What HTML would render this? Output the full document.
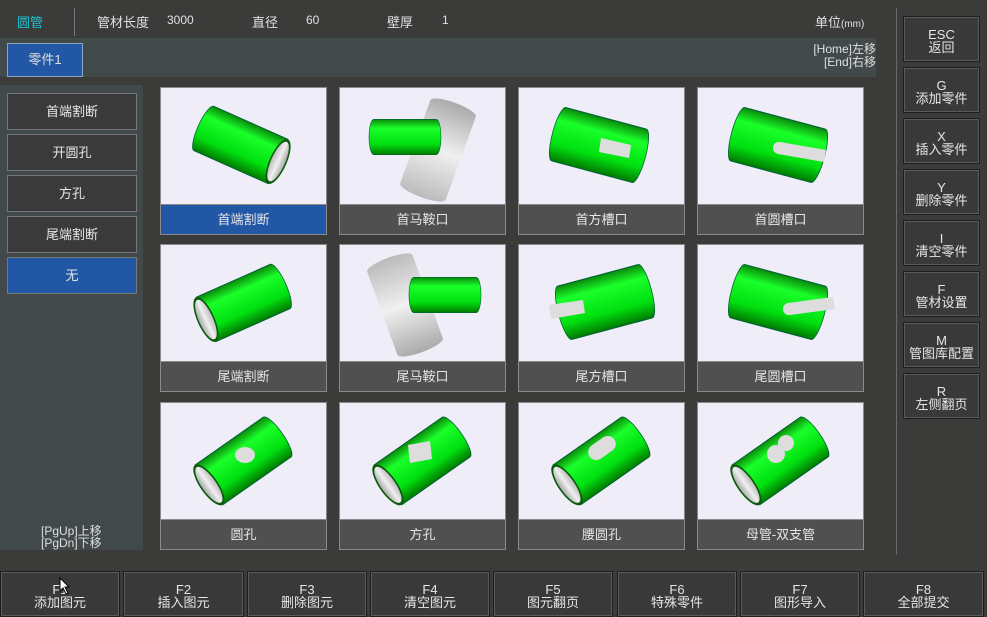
<!DOCTYPE html>
<html><head><meta charset="utf-8">
<style>
*{margin:0;padding:0;box-sizing:border-box}
body{width:987px;height:617px;background:#3b3b39;position:relative;overflow:hidden;font-family:"Liberation Sans","Noto Sans CJK SC",sans-serif;color:#e0e0e0;font-size:13px}
.a{position:absolute}
.btn{position:absolute;background:#393939;border:1px solid #1e1e1e;outline:1px solid #5a5a5a;outline-offset:-2px;text-align:center;color:#e6e6e6;font-size:13px;line-height:13px}
.lb{position:absolute;left:7px;width:130px;height:37px;background:#3a3a3a;border:1px solid #777;text-align:center;line-height:35px;font-size:13px;color:#e6e6e6}
.card{position:absolute;width:167px;height:148px;background:#efedf7;border:1px solid #8a8a8a}
.card svg{position:absolute;left:0;top:0}
.card .t{position:absolute;left:-1px;right:-1px;bottom:-1px;height:31px;background:#505050;border:1px solid #8a8a8a;text-align:center;line-height:29px;font-size:13px;color:#e6e6e6}
.card .t.s{background:#2157a5}
</style></head><body>
<svg width="0" height="0" style="position:absolute">
<defs>
<linearGradient id="g" x1="0" y1="0" x2="0" y2="1"><stop offset="0" stop-color="#0a8a0a"/><stop offset=".25" stop-color="#1aff2a"/><stop offset=".7" stop-color="#00e010"/><stop offset="1" stop-color="#007a00"/></linearGradient>
<linearGradient id="w" x1="0" y1="0" x2="1" y2="0"><stop offset="0" stop-color="#bbb"/><stop offset=".5" stop-color="#f0f0f0"/><stop offset="1" stop-color="#aaa"/></linearGradient>
<symbol id="p" viewBox="-60 -25 120 50" overflow="visible">
<path d="M-52,-22 L52,-22 L52,22 L-52,22 A8,22 0 0 1 -52,-22Z" fill="url(#g)" stroke="#063" stroke-width="1"/>
<ellipse cx="52" cy="0" rx="11" ry="22" fill="#0a5a0a"/>
<ellipse cx="52" cy="0" rx="9" ry="19.5" fill="url(#w)"/>
</symbol>
<symbol id="q" viewBox="-60 -25 120 50" overflow="visible">
<path d="M-52,-22 L52,-22 A8,22 0 0 1 52,22 L-52,22 A8,22 0 0 1 -52,-22Z" fill="url(#g)" stroke="#063" stroke-width="1"/>
</symbol>
<symbol id="c" viewBox="-60 -25 120 50" overflow="visible">
<path d="M-52,-22 L52,-22 A7,22 0 0 1 52,22 L-52,22 A7,22 0 0 1 -52,-22Z" fill="url(#w)"/>
</symbol>
</defs></svg>

<div class="a" style="left:17px;top:12px;color:#1ec0d0">圆管</div>
<div class="a" style="left:74px;top:8px;width:1px;height:28px;background:#777"></div>
<div class="a" style="left:97px;top:12px">管材长度</div>
<div class="a" style="left:167px;top:13px;font-size:12px">3000</div>
<div class="a" style="left:252px;top:12px">直径</div>
<div class="a" style="left:306px;top:13px;font-size:12px">60</div>
<div class="a" style="left:387px;top:12px">壁厚</div>
<div class="a" style="left:442px;top:13px;font-size:12px">1</div>
<div class="a" style="left:815px;top:12px;font-size:13px">单位<span style="font-size:10px">(mm)</span></div>
<div class="a" style="left:896px;top:8px;width:1px;height:547px;background:#6a6a6a"></div>

<div class="a" style="left:0;top:38px;width:876px;height:39px;background:#41494b"></div>
<div class="a" style="left:7px;top:43px;width:76px;height:34px;background:#2157a5;border:1px solid #8ab;text-align:center;line-height:32px;font-size:13px">零件1</div>
<div class="a" style="left:790px;top:43px;width:86px;text-align:right;font-size:12px;line-height:13px">[Home]左移<br>[End]右移</div>

<div class="a" style="left:0;top:85px;width:143px;height:465px;background:#41494b"></div>
<div class="lb" style="top:93px">首端割断</div>
<div class="lb" style="top:134px">开圆孔</div>
<div class="lb" style="top:175px">方孔</div>
<div class="lb" style="top:216px">尾端割断</div>
<div class="lb" style="top:257px;background:#2157a5">无</div>
<div class="a" style="left:41px;top:525px;font-size:12px;line-height:12px">[PgUp]上移<br>[PgDn]下移</div>

<div class="card" style="left:160px;top:87px"><svg width="167" height="118"><use href="#p" x="-60" y="-25" width="120" height="50" transform="translate(80,57) rotate(24) scale(.78,1.1)"/></svg><div class="t s">首端割断</div></div>
<div class="card" style="left:339px;top:87px"><svg width="167" height="118"><use href="#c" x="-60" y="-25" width="120" height="50" transform="translate(98,62) rotate(-70) scale(.85,1.1)"/><use href="#q" x="-60" y="-25" width="120" height="50" transform="translate(65,49) scale(.6,.8)"/></svg><div class="t">首马鞍口</div></div>
<div class="card" style="left:518px;top:87px"><svg width="167" height="118"><use href="#q" x="-60" y="-25" width="120" height="50" transform="translate(80,57) rotate(15) scale(.8,1.25)"/><path d="M82,50 L112,57 L110,70 L80,64Z" fill="#ddd"/></svg><div class="t">首方槽口</div></div>
<div class="card" style="left:697px;top:87px"><svg width="167" height="118"><use href="#q" x="-60" y="-25" width="120" height="50" transform="translate(80,57) rotate(15) scale(.8,1.25)"/><path d="M82,54 L128,62 L126,74 L80,66 A6,6 0 0 1 82,54Z" fill="#ddd"/></svg><div class="t">首圆槽口</div></div>

<div class="card" style="left:160px;top:244px"><svg width="167" height="118"><use href="#p" x="-60" y="-25" width="120" height="50" transform="translate(82,58) rotate(-24) scale(-.78,1.1)"/></svg><div class="t">尾端割断</div></div>
<div class="card" style="left:339px;top:244px"><svg width="167" height="118"><use href="#c" x="-60" y="-25" width="120" height="50" transform="translate(65,60) rotate(70) scale(.85,1.1)"/><use href="#q" x="-60" y="-25" width="120" height="50" transform="translate(105,50) scale(.6,.8)"/></svg><div class="t">尾马鞍口</div></div>
<div class="card" style="left:518px;top:244px"><svg width="167" height="118"><use href="#q" x="-60" y="-25" width="120" height="50" transform="translate(86,57) rotate(-15) scale(.8,1.25)"/><path d="M30,60 L64,55 L66,68 L32,74Z" fill="#ddd"/></svg><div class="t">尾方槽口</div></div>
<div class="card" style="left:697px;top:244px"><svg width="167" height="118"><use href="#q" x="-60" y="-25" width="120" height="50" transform="translate(80,57) rotate(15) scale(.8,1.25)"/><path d="M135,52 L90,58 A6,6 0 0 0 92,70 L137,64Z" fill="#ddd"/></svg><div class="t">尾圆槽口</div></div>

<div class="card" style="left:160px;top:402px"><svg width="167" height="118"><use href="#p" x="-60" y="-25" width="120" height="50" transform="translate(82,58) rotate(-35) scale(-.8,1.1)"/><ellipse cx="84" cy="52" rx="10" ry="8" fill="#ddd"/></svg><div class="t">圆孔</div></div>
<div class="card" style="left:339px;top:402px"><svg width="167" height="118"><use href="#p" x="-60" y="-25" width="120" height="50" transform="translate(82,58) rotate(-35) scale(-.8,1.1)"/><path d="M68,42 L90,38 L92,56 L70,60Z" fill="#ddd"/></svg><div class="t">方孔</div></div>
<div class="card" style="left:518px;top:402px"><svg width="167" height="118"><use href="#p" x="-60" y="-25" width="120" height="50" transform="translate(82,58) rotate(-35) scale(-.8,1.1)"/><rect x="-15" y="-8" width="30" height="16" rx="8" fill="#ddd" transform="translate(83,45) rotate(-35)"/></svg><div class="t">腰圆孔</div></div>
<div class="card" style="left:697px;top:402px"><svg width="167" height="118"><use href="#p" x="-60" y="-25" width="120" height="50" transform="translate(82,58) rotate(-35) scale(-.8,1.1)"/><circle cx="88" cy="40" r="8" fill="#ddd"/><circle cx="78" cy="51" r="9" fill="#ddd"/></svg><div class="t">母管-双支管</div></div>

<div class="btn" style="left:903px;top:16px;width:77px;height:46px;padding-top:11px">ESC<br>返回</div>
<div class="btn" style="left:903px;top:67px;width:77px;height:46px;padding-top:11px">G<br>添加零件</div>
<div class="btn" style="left:903px;top:118px;width:77px;height:46px;padding-top:11px">X<br>插入零件</div>
<div class="btn" style="left:903px;top:169px;width:77px;height:46px;padding-top:11px">Y<br>删除零件</div>
<div class="btn" style="left:903px;top:220px;width:77px;height:46px;padding-top:11px">I<br>清空零件</div>
<div class="btn" style="left:903px;top:271px;width:77px;height:46px;padding-top:11px">F<br>管材设置</div>
<div class="btn" style="left:903px;top:322px;width:77px;height:46px;padding-top:11px">M<br>管图库配置</div>
<div class="btn" style="left:903px;top:373px;width:77px;height:46px;padding-top:11px">R<br>左侧翻页</div>

<div class="btn" style="left:0;top:571px;width:120px;height:46px;padding-top:11px">F1<br>添加图元</div>
<div class="btn" style="left:123px;top:571px;width:121px;height:46px;padding-top:11px">F2<br>插入图元</div>
<div class="btn" style="left:247px;top:571px;width:120px;height:46px;padding-top:11px">F3<br>删除图元</div>
<div class="btn" style="left:370px;top:571px;width:120px;height:46px;padding-top:11px">F4<br>清空图元</div>
<div class="btn" style="left:493px;top:571px;width:120px;height:46px;padding-top:11px">F5<br>图元翻页</div>
<div class="btn" style="left:617px;top:571px;width:120px;height:46px;padding-top:11px">F6<br>特殊零件</div>
<div class="btn" style="left:740px;top:571px;width:120px;height:46px;padding-top:11px">F7<br>图形导入</div>
<div class="btn" style="left:863px;top:571px;width:121px;height:46px;padding-top:11px">F8<br>全部提交</div>
<svg class="a" style="left:59px;top:577px" width="12" height="18"><path d="M1,1 L1,14 L4,11 L7,17 L9,16 L6,10 L10,10Z" fill="#fff" stroke="#000" stroke-width="1"/></svg>
</body></html>
